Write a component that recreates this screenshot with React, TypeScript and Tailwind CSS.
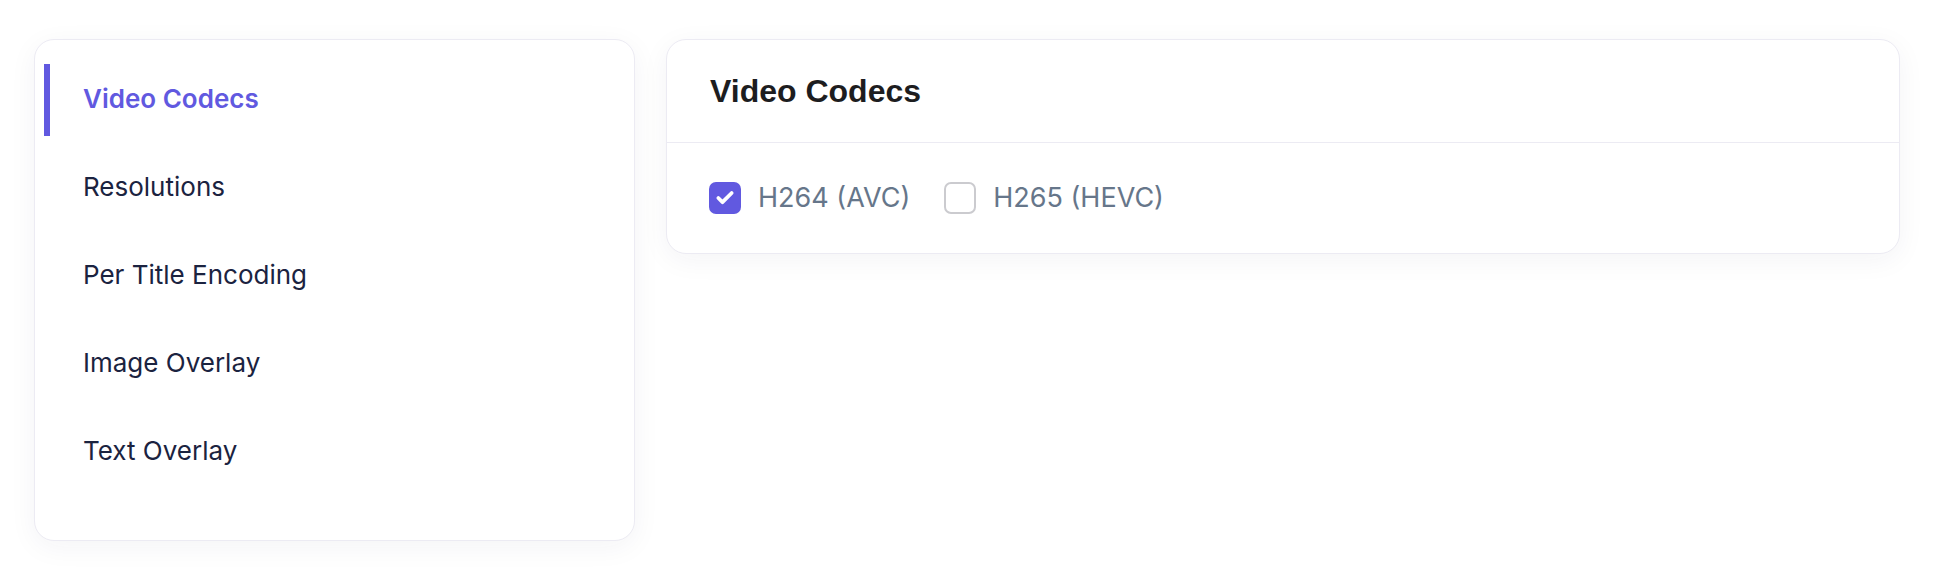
import { Check } from 'lucide-react';

const navItems = ['Video Codecs', 'Resolutions', 'Per Title Encoding', 'Image Overlay', 'Text Overlay'];

const codecs = [
  { label: 'H264 (AVC)', checked: true },
  { label: 'H265 (HEVC)', checked: false },
];

export default function App() {
  const active = 'Video Codecs';

  return (
    <div className="min-h-screen bg-white flex items-start gap-[31px] pl-[34px] pr-[42px] pt-[39px] font-['Inter',sans-serif]">
      <div className="w-[601px] shrink-0 rounded-[20px] border border-[#ecebf3] bg-white shadow-[0_6px_28px_rgba(30,30,80,0.05)] px-[9px] pt-6 pb-[52px]">
        <nav className="flex flex-col gap-4">
          {navItems.map((item) => {
            const isActive = item === active;
            return (
              <div
                key={item}
                className={`h-[72px] flex items-center pb-[3px] pl-[33px] border-l-[6px] text-[26px] ${
                  isActive ? 'border-[#6159e0] text-[#6159e0] font-semibold' : 'border-transparent text-[#1b2340]'
                }`}
              >
                {item}
              </div>
            );
          })}
        </nav>
      </div>

      <div className="flex-1 rounded-[20px] border border-[#ecebf3] bg-white shadow-[0_6px_28px_rgba(30,30,80,0.05)]">
        <div className="h-[103px] flex items-center px-[43px] border-b border-[#ecebf3]">
          <h2 className="font-['Liberation_Sans',sans-serif] font-bold text-[32px] text-[#1d1d1f]">Video Codecs</h2>
        </div>
        <div className="flex items-center px-[42px] pt-[39px] pb-[39px]">
          {codecs.map((c) => (
            <label key={c.label} className="flex items-center h-8 mr-[34px]">
              <span
                className={`w-8 h-8 rounded-[7px] flex items-center justify-center ${
                  c.checked ? 'bg-[#6159e0]' : 'border-2 border-[#cbcbcf] bg-white'
                }`}
              >
                {c.checked && <Check size={20} strokeWidth={4.5} className="text-white" />}
              </span>
              <span className="ml-[17px] text-[27px] leading-8 text-[#66768a]">{c.label}</span>
            </label>
          ))}
        </div>
      </div>
    </div>
  );
}
